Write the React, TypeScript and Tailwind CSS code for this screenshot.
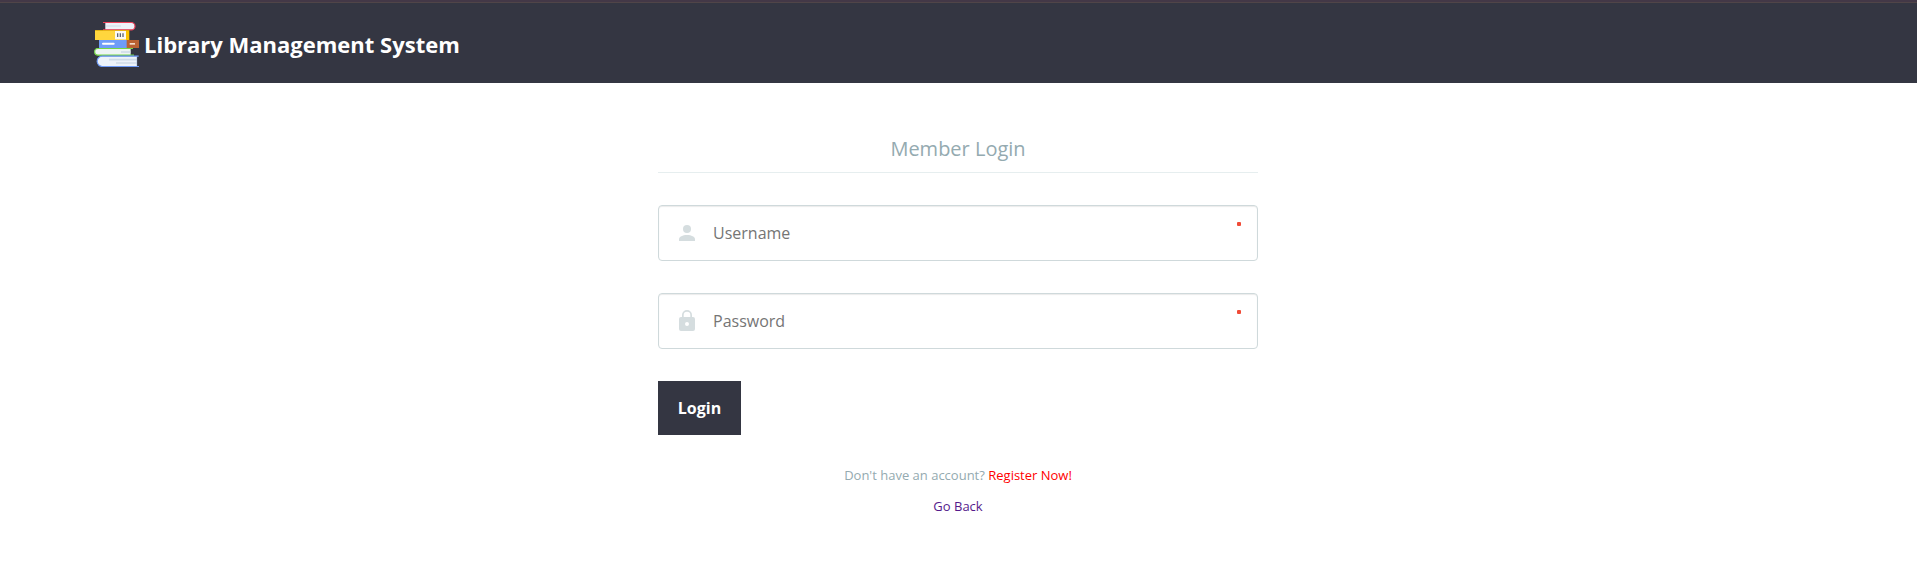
import React from 'react';

function BooksLogo() {
  return (
    <svg viewBox="30 36 135 135" className="h-[45px] w-[45px] shrink-0" aria-hidden="true">
      <path d="M64 38h78a10.500 10.500 0 0 1 0 21H64z" fill="#edf1f8" />
      <path d="M57 37.500h85a11 11 0 0 1 0 22H57" fill="none" stroke="#f0435c" strokeWidth="3.500" />
      <path d="M66 48h45" stroke="#cfdce8" strokeWidth="3" />
      <path d="M33 61h93v29H33z" fill="#ffd63d" />
      <path d="M126 61h10v29h-10z" fill="#fcc400" />
      <path d="M33 61.500h102" stroke="#efb800" strokeWidth="2" />
      <path d="M93 63h33v25H93z" fill="#fbfaf4" />
      <path d="M101 70v11M109 70v11M117 70v11" stroke="#5c6475" strokeWidth="4" />
      <path d="M45 90h84v24H45z" fill="#6f9cf8" />
      <path d="M57 101.500h32" stroke="#fff" strokeWidth="6" strokeLinecap="round" />
      <path d="M128 90h37v24h-37z" fill="#b96232" />
      <path d="M137 101.500h16" stroke="#f3dcc9" strokeWidth="5" />
      <path d="M42 115h98v21H42a10.500 10.500 0 0 1 0-21" fill="#edf4f4" />
      <path d="M147 115.500H42a10 10 0 0 0 0 20h108" fill="none" stroke="#73d746" strokeWidth="3.500" />
      <path d="M111 126h28" stroke="#cfdce8" strokeWidth="5" />
      <path d="M54 139h105v30H54a15 15 0 0 1 0-30" fill="#edf3fa" />
      <path d="M75 149h84M96 159h63" stroke="#cfdce8" strokeWidth="5" />
      <path d="M158 139v30" stroke="#b7cde5" strokeWidth="2" />
      <path d="M164 138.500H55a15 15 0 0 0 0 31h110" fill="none" stroke="#6f9cf8" strokeWidth="3.500" />
    </svg>
  );
}

function UserIcon() {
  return (
    <svg viewBox="0 0 16 16" className="h-4 w-4" fill="#d5dddf" aria-hidden="true">
      <circle cx="8" cy="4" r="4" />
      <path d="M8 10c-4.400 0-8 1.800-8 4.200V16h16v-1.800C16 11.800 12.400 10 8 10z" />
    </svg>
  );
}

function LockIcon() {
  return (
    <svg viewBox="0 0 16 21" className="mb-px h-[21px] w-4" fill="#d5dddf" aria-hidden="true">
      <path
        fillRule="evenodd"
        d="M14 7h-1V5A5 5 0 0 0 3 5v2H2a2 2 0 0 0-2 2v10a2 2 0 0 0 2 2h12a2 2 0 0 0 2-2V9a2 2 0 0 0-2-2zM4.700 5a3.300 3.300 0 0 1 6.600 0v2H4.700zM8 16a2 2 0 1 1 0-4 2 2 0 0 1 0 4z"
      />
    </svg>
  );
}

interface FieldProps {
  icon: React.ReactNode;
  label: string;
  type: string;
}

function Field({ icon, label, type }: FieldProps) {
  return (
    <label className="flex h-14 items-start rounded-[4px] border border-[#cfd9db] bg-white pl-5 pr-4 shadow-[inset_0_1px_1px_rgba(0,0,0,0.08)]">
      <span className="flex h-[54px] w-[34px] items-center">{icon}</span>
      <input
        type={type}
        placeholder={label}
        aria-label={label}
        className="h-[54px] min-w-0 flex-1 bg-transparent text-base text-[#2b3e51] outline-none placeholder:text-[#757575]"
      />
      <span className="mt-4 h-1 w-1 rounded-[1px] bg-[#f04b37]" />
    </label>
  );
}

export default function App() {
  return (
    <div className="min-h-[574px] bg-white font-['Open_Sans',sans-serif]">
      <header className="h-[83px] border-t-2 border-[#433847] bg-[#343642]">
        <div className="flex h-[81px] items-start border-t border-[#504548] pl-[94px] pt-[19px]">
          <BooksLogo />
          <h1 className="ml-[5px] mt-[5px] text-[22px] font-bold leading-[34px] text-white">
            Library Management System
          </h1>
        </div>
      </header>
      <main className="mx-auto box-content w-[600px] pr-px pt-[50px]">
        <form onSubmit={(e) => e.preventDefault()}>
          <h2 className="h-10 border-b border-[#e6eeef] text-center text-[20px] leading-[32px] text-[#94aab0]">
            Member Login
          </h2>
          <div className="mt-8 flex flex-col gap-8">
            <Field icon={<UserIcon />} label="Username" type="text" />
            <Field icon={<LockIcon />} label="Password" type="password" />
          </div>
          <button className="mt-8 block h-[54px] w-[83px] bg-[#343642] text-base font-bold text-white">
            Login
          </button>
          <div className="mt-[30px] text-center text-[13px] leading-5 text-[#94aab0]">
            <p>
              Don't have an account?{' '}
              <a href="#" className="text-[#ff0000]">Register Now!</a>
            </p>
            <p className="mt-[11px]">
              <a href="#" className="text-[#551a8b]">Go Back</a>
            </p>
          </div>
        </form>
      </main>
    </div>
  );
}
